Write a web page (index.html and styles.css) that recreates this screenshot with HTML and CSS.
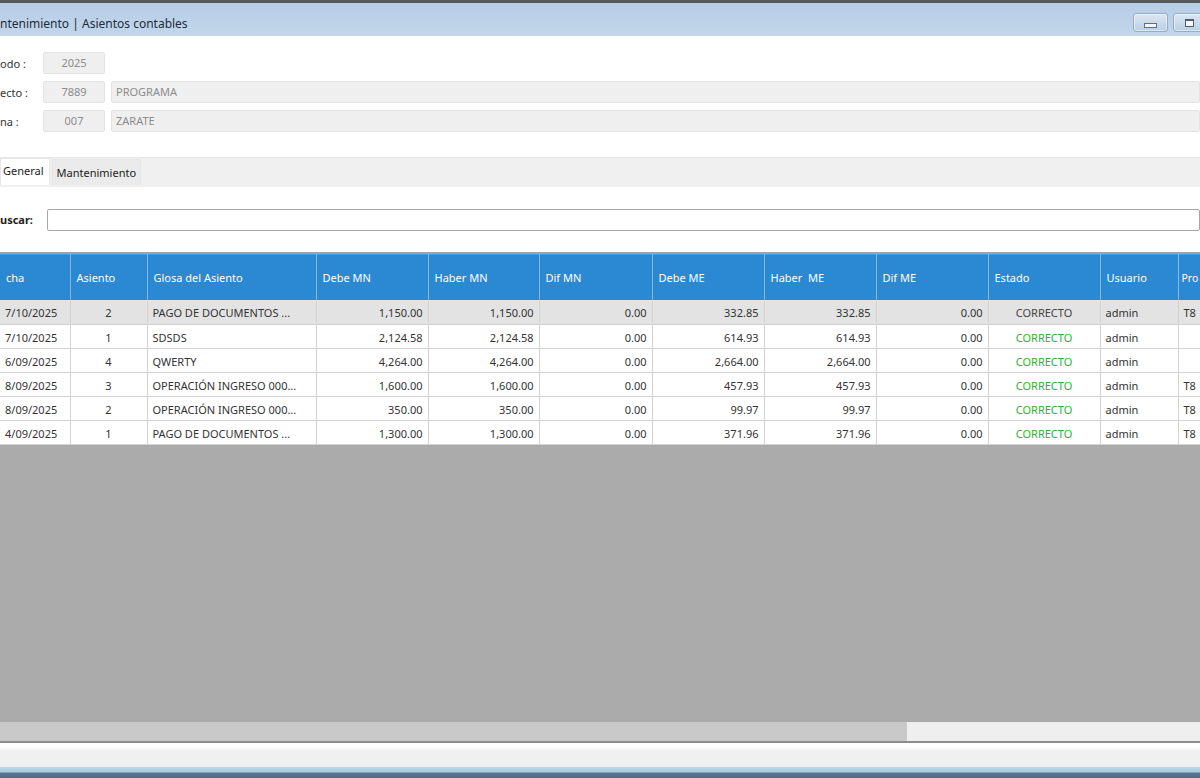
FILE: index.html
```html
<!DOCTYPE html>
<html lang="es">
<head>
  <meta charset="UTF-8">
  <meta name="viewport" content="width=device-width, initial-scale=1.0">
  <title>Mantenimiento | Asientos contables</title>
  <link rel="stylesheet" href="styles.css">
</head>
<body>

  <div class="window">
    <div class="frame-top"></div>

    <div class="titlebar">
      <span class="title">ntenimiento | Asientos contables</span>
      <div class="win-buttons">
        <button class="win-btn win-min"><span class="dash"></span></button>
        <button class="win-btn win-max"><span class="box"></span></button>
      </div>
    </div>

    <div class="head-form">
      <div class="field-row">
        <span class="field-label">odo :</span>
        <div class="field-code">2025</div>
      </div>
      <div class="field-row">
        <span class="field-label">ecto :</span>
        <div class="field-code">7889</div>
        <div class="field-name">PROGRAMA</div>
      </div>
      <div class="field-row">
        <span class="field-label">na :</span>
        <div class="field-code">007</div>
        <div class="field-name">ZARATE</div>
      </div>
    </div>

    <div class="tabs">
      <div class="tab active">General</div>
      <div class="tab">Mantenimiento</div>
    </div>

    <div class="search">
      <label class="search-label">uscar:</label>
      <input class="search-input" type="text">
    </div>

    <div class="grid">
      <table class="grid-table">
        <colgroup>
          <col style="width:70px"><col style="width:77px"><col style="width:169px">
          <col style="width:112px"><col style="width:111px"><col style="width:113px">
          <col style="width:112px"><col style="width:112px"><col style="width:112px">
          <col style="width:112px"><col style="width:78px"><col style="width:100px">
        </colgroup>
        <thead>
          <tr>
            <th>cha</th><th>Asiento</th><th>Glosa del Asiento</th>
            <th>Debe MN</th><th>Haber MN</th><th>Dif MN</th>
            <th>Debe ME</th><th>Haber&nbsp; ME</th><th>Dif ME</th>
            <th>Estado</th><th>Usuario</th><th class="last">Pro</th>
          </tr>
        </thead>
        <tbody>
          <tr class="selected">
            <td>7/10/2025</td><td class="c">2</td><td>PAGO DE DOCUMENTOS ...</td>
            <td class="n">1,150.00</td><td class="n">1,150.00</td><td class="n">0.00</td>
            <td class="n">332.85</td><td class="n">332.85</td><td class="n">0.00</td>
            <td class="c state">CORRECTO</td><td>admin</td><td>T8</td>
          </tr>
          <tr>
            <td>7/10/2025</td><td class="c">1</td><td>SDSDS</td>
            <td class="n">2,124.58</td><td class="n">2,124.58</td><td class="n">0.00</td>
            <td class="n">614.93</td><td class="n">614.93</td><td class="n">0.00</td>
            <td class="c state">CORRECTO</td><td>admin</td><td></td>
          </tr>
          <tr>
            <td>6/09/2025</td><td class="c">4</td><td>QWERTY</td>
            <td class="n">4,264.00</td><td class="n">4,264.00</td><td class="n">0.00</td>
            <td class="n">2,664.00</td><td class="n">2,664.00</td><td class="n">0.00</td>
            <td class="c state">CORRECTO</td><td>admin</td><td></td>
          </tr>
          <tr>
            <td>8/09/2025</td><td class="c">3</td><td>OPERACIÓN INGRESO 000...</td>
            <td class="n">1,600.00</td><td class="n">1,600.00</td><td class="n">0.00</td>
            <td class="n">457.93</td><td class="n">457.93</td><td class="n">0.00</td>
            <td class="c state">CORRECTO</td><td>admin</td><td>T8</td>
          </tr>
          <tr>
            <td>8/09/2025</td><td class="c">2</td><td>OPERACIÓN INGRESO 000...</td>
            <td class="n">350.00</td><td class="n">350.00</td><td class="n">0.00</td>
            <td class="n">99.97</td><td class="n">99.97</td><td class="n">0.00</td>
            <td class="c state">CORRECTO</td><td>admin</td><td>T8</td>
          </tr>
          <tr>
            <td>4/09/2025</td><td class="c">1</td><td>PAGO DE DOCUMENTOS ...</td>
            <td class="n">1,300.00</td><td class="n">1,300.00</td><td class="n">0.00</td>
            <td class="n">371.96</td><td class="n">371.96</td><td class="n">0.00</td>
            <td class="c state">CORRECTO</td><td>admin</td><td>T8</td>
          </tr>
        </tbody>
      </table>
    </div>

    <div class="hscroll">
      <div class="hscroll-thumb"></div>
    </div>

    <div class="statusbar"></div>
    <div class="taskbar"></div>
  </div>

</body>
</html>
```

FILE: styles.css
```css
html, body {
  margin: 0;
}

body {
  width: 1200px;
  height: 778px;
  overflow: hidden;
  font-family: "Noto Sans", "DejaVu Sans", sans-serif;
  font-size: 11px;
  color: #222;
  background-color: white;
}

.window {
  display: flex;
  flex-direction: column;
  height: 778px;
}

.frame-top {
  height: 3px;
  background-color: #55585c;
}

/* title bar */
.titlebar {
  height: 33px;
  display: flex;
  justify-content: space-between;
  align-items: flex-end;
  background: linear-gradient(#b6cde6, #c3d6ea);
}

.title {
  font-size: 12px;
  color: #1b2c40;
  padding-bottom: 4px;
}

.win-buttons {
  display: flex;
  gap: 5px;
  padding-bottom: 4px;
  margin-right: -6px;
}

.win-btn {
  height: 19px;
  border: 1px solid #93aecb;
  border-radius: 3px;
  background: linear-gradient(#dbe6f2, #bccfe4);
  box-shadow: inset 0 0 0 1px rgba(255, 255, 255, 0.5);
  padding: 0;
  display: flex;
  justify-content: center;
  align-items: center;
}

.win-min {
  width: 35px;
}

.win-max {
  width: 33px;
}

.dash {
  width: 11px;
  height: 3px;
  margin-top: 6px;
  background-color: #f4f6f8;
  border: 1px solid #5c6f84;
}

.box {
  width: 7px;
  height: 5px;
  background-color: #f4f6f8;
  border: 1px solid #4d5e70;
  border-top-width: 2px;
}

/* header fields */
.head-form {
  height: 121px;
  box-sizing: border-box;
  padding-top: 16px;
  display: flex;
  flex-direction: column;
  gap: 7px;
}

.field-row {
  display: flex;
  height: 22px;
  align-items: center;
}

.field-label {
  width: 43px;
  color: #333;
}

.field-code,
.field-name {
  height: 22px;
  box-sizing: border-box;
  line-height: 20px;
  background-color: #efefef;
  border: 1px solid #e3e3e3;
  border-radius: 2px;
  color: #8c8c8c;
}

.field-code {
  width: 62px;
  text-align: center;
}

.field-name {
  flex: 1;
  margin-left: 6px;
  padding-left: 4px;
}

/* tabs */
.tabs {
  height: 30px;
  box-sizing: border-box;
  display: flex;
  align-items: flex-end;
  background-color: #f0f0f0;
  border-top: 1px solid #e6e6e6;
  padding-bottom: 2px;
}

.tab {
  height: 25px;
  line-height: 25px;
  padding: 0 4px;
  background-color: #ebebeb;
  border: 1px solid #e6e6e6;
  border-bottom: none;
  color: #222;
}

.tab.active {
  height: 26px;
  line-height: 23px;
  padding: 0 5px 0 2px;
  background-color: white;
  margin-right: 2px;
}

/* search */
.search {
  height: 65px;
  box-sizing: border-box;
  padding-top: 22px;
  display: flex;
  align-items: flex-start;
}

.search-label {
  width: 47px;
  height: 22px;
  line-height: 22px;
  font-weight: bold;
  color: #222;
}

.search-input {
  flex: 1;
  height: 22px;
  box-sizing: border-box;
  margin: 0;
  border: 1px solid #a6a6a6;
  border-radius: 2px;
  background-color: white;
}

/* grid */
.grid {
  flex: 1;
  overflow: hidden;
  background-color: #ababab;
  border-top: 2px solid #a2a2a2;
}

.grid-table {
  width: 1278px;
  table-layout: fixed;
  border-collapse: collapse;
}

.grid-table th {
  height: 45px;
  padding: 0 6px;
  background-color: #2b88d3;
  border-right: 1px solid #84bbe8;
  border-top: 1px solid #4a9ade;
  color: white;
  font-weight: normal;
  font-size: 11px;
  text-align: left;
  white-space: nowrap;
  overflow: hidden;
}

.grid-table th.last {
  padding-left: 3px;
  font-size: 10.5px;
}

.grid-table td {
  height: 24px;
  padding: 2px 5px 0;
  box-sizing: border-box;
  background-color: white;
  border-right: 1px solid #d2d2d2;
  border-bottom: 1px solid #d2d2d2;
  color: #333;
  white-space: nowrap;
  overflow: hidden;
}

.grid-table tr.selected td {
  background-color: #e3e3e3;
}

.grid-table td.n {
  text-align: right;
}

.grid-table td.c {
  text-align: center;
}

.grid-table td.state {
  color: #3aaa3a;
}

.grid-table tr.selected td.state {
  color: #444;
}

/* bottom scroll and bars */
.hscroll {
  height: 19px;
  background-color: #efefef;
  border-bottom: 2px solid #8e8e8e;
}

.hscroll-thumb {
  width: 907px;
  height: 19px;
  background-color: #c9c9c9;
}

.statusbar {
  height: 24px;
  background: linear-gradient(white 0, white 3px, #f0f0f0 8px);
}

.taskbar {
  height: 11px;
  background: linear-gradient(#bcdbea 0, #a8cadd 5px, #5b7890 6px, #4f6d86 11px);
}
```
